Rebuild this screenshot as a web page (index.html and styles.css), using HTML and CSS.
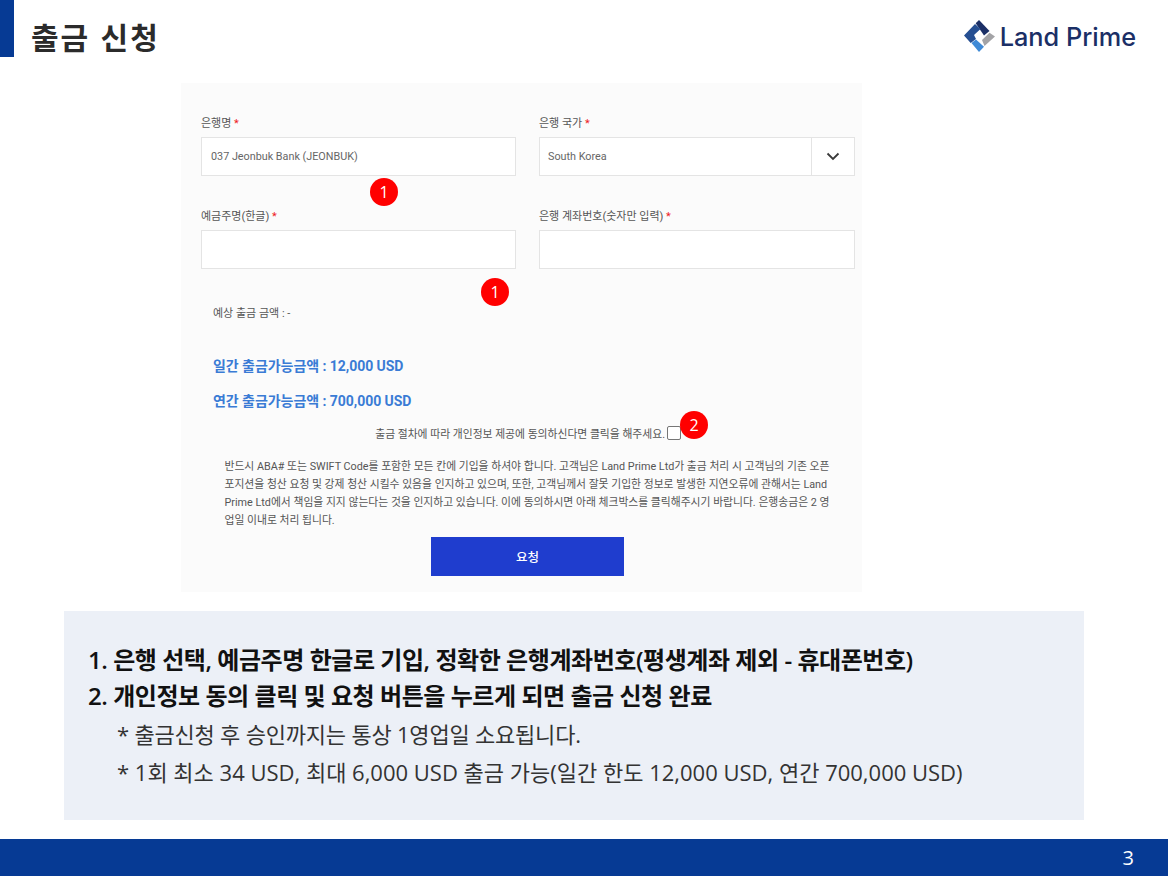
FILE: index.html
```html
<!DOCTYPE html>
<html lang="ko">
<head>
<meta charset="utf-8">
<title>출금 신청</title>
<link rel="stylesheet" href="styles.css">
</head>
<body>
<div class="page">
  <header class="header">
    <div class="title-wrap">
      <div class="accent"></div>
      <h1 class="title">출금 신청</h1>
    </div>
    <div class="logo">
      <svg class="logo-mark" width="32" height="32" viewBox="0 0 32 32">
        <polygon points="11.7,3.3 15,0 25.5,11 20,15.5" fill="#1b2f66"/>
        <polygon points="0,15.5 11,4 16.5,9 10,15 12,19 6.7,23" fill="#264f92"/>
        <polygon points="18,20 25.5,12.7 31,16.5 20.5,26" fill="#a3a3a6"/>
        <polygon points="7.5,23 12,19.5 20,26.7 15,32" fill="#3f8ad6"/>
      </svg>
      <span class="logo-text">Land Prime</span>
    </div>
  </header>

  <section class="panel">
    <div class="fields">
      <div class="field">
        <label class="label">은행명 <span class="req">*</span></label>
        <div class="box"><span class="box-text">037 Jeonbuk Bank (JEONBUK)</span></div>
      </div>
      <div class="field">
        <label class="label">은행 국가 <span class="req">*</span></label>
        <div class="box select">
          <span class="box-text select-text">South Korea</span>
          <span class="caret">
            <svg width="14" height="9" viewBox="0 0 14 9"><path d="M1.5 1.5 L7 7 L12.5 1.5" fill="none" stroke="#3a3a3a" stroke-width="1.8"/></svg>
          </span>
        </div>
      </div>
      <div class="field">
        <label class="label">예금주명(한글) <span class="req">*</span></label>
        <div class="box"></div>
      </div>
      <div class="field">
        <label class="label">은행 계좌번호(숫자만 입력) <span class="req">*</span></label>
        <div class="box"></div>
      </div>
    </div>
    <p class="estimate">예상 출금 금액 : -</p>
    <p class="limit limit-day">일간 출금가능금액 : 12,000 USD</p>
    <p class="limit limit-year">연간 출금가능금액 : 700,000 USD</p>
    <div class="consent">
      <span>출금 절차에 따라 개인정보 제공에 동의하신다면 클릭을 해주세요.</span>
      <span class="checkbox"></span>
    </div>
    <p class="notice">반드시 ABA# 또는 SWIFT Code를 포함한 모든 칸에 기입을 하셔야 합니다. 고객님은 Land Prime Ltd가 출금 처리 시 고객님의 기존 오픈 포지션을 청산 요청 및 강제 청산 시킬수 있음을 인지하고 있으며, 또한, 고객님께서 잘못 기입한 정보로 발생한 지연오류에 관해서는 Land Prime Ltd에서 책임을 지지 않는다는 것을 인지하고 있습니다. 이에 동의하시면 아래 체크박스를 클릭해주시기 바랍니다. 은행송금은 2 영업일 이내로 처리 됩니다.</p>
    <div class="actions"><button class="submit">요청</button></div>
    <span class="badge badge-a">1</span>
    <span class="badge badge-b">1</span>
    <span class="badge badge-c">2</span>
  </section>

  <section class="callout">
    <p class="step">1. 은행 선택, 예금주명 한글로 기입, 정확한 은행계좌번호(평생계좌 제외 - 휴대폰번호)</p>
    <p class="step">2. 개인정보 동의 클릭 및 요청 버튼을 누르게 되면 출금 신청 완료</p>
    <p class="note note-first">* 출금신청 후 승인까지는 통상 1영업일 소요됩니다.</p>
    <p class="note">* 1회 최소 34 USD, 최대 6,000 USD 출금 가능(일간 한도 12,000 USD, 연간 700,000 USD)</p>
  </section>

  <footer class="footer"><span class="page-no">3</span></footer>
</div>
</body>
</html>
```
FILE: styles.css
```css
* { box-sizing: border-box; }
html, body { margin: 0; padding: 0; background: #fff; }
p, h1 { margin: 0; }
.page {
  width: 1168px;
  height: 876px;
  overflow: hidden;
  display: flex;
  flex-direction: column;
  font-family: "Open Sans", "Noto Sans CJK KR", sans-serif;
}
.header {
  height: 57px;
  display: flex;
  justify-content: space-between;
  align-items: flex-start;
  padding-right: 32px;
}
.title-wrap { display: flex; height: 57px; }
.accent { width: 14px; height: 57px; background: #063a94; }
.title {
  margin: 16px 0 0 17px;
  font-size: 30px;
  line-height: 40px;
  font-weight: 700;
  letter-spacing: 2px;
  color: #2b2b2b;
  font-family: "Noto Sans CJK KR", sans-serif;
}
.logo { display: flex; align-items: center; gap: 4px; margin-top: 20px; height: 32px; }
.logo-text {
  font-family: "Inter", sans-serif;
  font-weight: 500;
  font-size: 25.3px;
  line-height: 34px;
  padding-top: 1px;
  color: #1b2f66;
}
.panel {
  position: relative;
  margin: 26px 0 0 181px;
  width: 681px;
  height: 509px;
  background: #fbfbfb;
  padding: 32px 8px 0 20px;
  font-family: "Roboto", "Noto Sans CJK KR", sans-serif;
  color: #555;
  font-size: 11px;
}
.fields {
  display: grid;
  grid-template-columns: 315px 316px;
  column-gap: 23px;
  row-gap: 15px;
}
.field { display: flex; flex-direction: column; height: 78px; gap: 5px; }
.label { height: 17px; line-height: 17px; font-size: 11px; color: #555; }
.req { color: #ee1c25; }
.box {
  height: 39px;
  background: #fff;
  border: 1px solid #e4e4e4;
  display: flex;
  align-items: center;
}
.box-text { padding: 0 0 1px 9px; font-size: 10.8px; color: #666; }
.select-text { padding-left: 8px; flex: 1; }
.caret {
  width: 43px;
  height: 37px;
  border-left: 1px solid #e4e4e4;
  display: flex;
  align-items: center;
  justify-content: center;
}
.estimate { margin: 20px 0 0 12px; line-height: 16px; font-size: 11px; color: #555; }
.limit { margin-left: 12px; font-size: 14px; line-height: 20px; font-weight: 700; color: #3a7bd5; letter-spacing: -0.05px; }
.limit-day { margin-top: 34px; }
.limit-year { margin-top: 15px; }
.consent {
  display: flex;
  align-items: center;
  justify-content: flex-end;
  margin: 14px 173px 0 0;
  height: 16px;
  gap: 2px;
  font-size: 10.8px;
  color: #555;
}
.checkbox { width: 14px; height: 14px; background: #fff; border: 1px solid #767676; border-radius: 2px; }
.notice {
  margin: 17px 21px 0 23.5px;
  font-size: 10.8px;
  line-height: 18px;
  color: #555;
}
.actions { display: flex; justify-content: center; margin-top: 7px; }
.submit {
  width: 193px;
  height: 39px;
  background: #1f3dce;
  border: 0;
  color: #fff;
  font-family: inherit;
  font-size: 12.5px;
  font-weight: 500;
}
.badge {
  position: absolute;
  width: 28px;
  height: 28px;
  border-radius: 50%;
  background: #f00;
  color: #fff;
  text-align: center;
  font-family: "Open Sans", sans-serif;
  font-size: 16px;
  line-height: 28px;
}
.badge-a { left: 189px; top: 95px; }
.badge-b { left: 300px; top: 195px; }
.badge-c { left: 499px; top: 328px; }
.callout {
  margin: 19px 0 0 64px;
  width: 1020px;
  height: 209px;
  background: #ecf0f7;
  padding: 31px 0 0 24px;
}
.step {
  font-size: 24px;
  line-height: 36px;
  font-weight: 600;
  color: #111;
  letter-spacing: -0.45px;
}
.note {
  margin-left: 29px;
  font-size: 22px;
  line-height: 38px;
  font-weight: 400;
  color: #333;
}
.note-first { margin-top: 1px; letter-spacing: -0.2px; }
.footer {
  margin-top: 19px;
  height: 37px;
  background: #063a94;
  display: flex;
  align-items: center;
  justify-content: flex-end;
  padding-right: 34px;
}
.page-no { color: #fff; font-size: 20px; }
```
